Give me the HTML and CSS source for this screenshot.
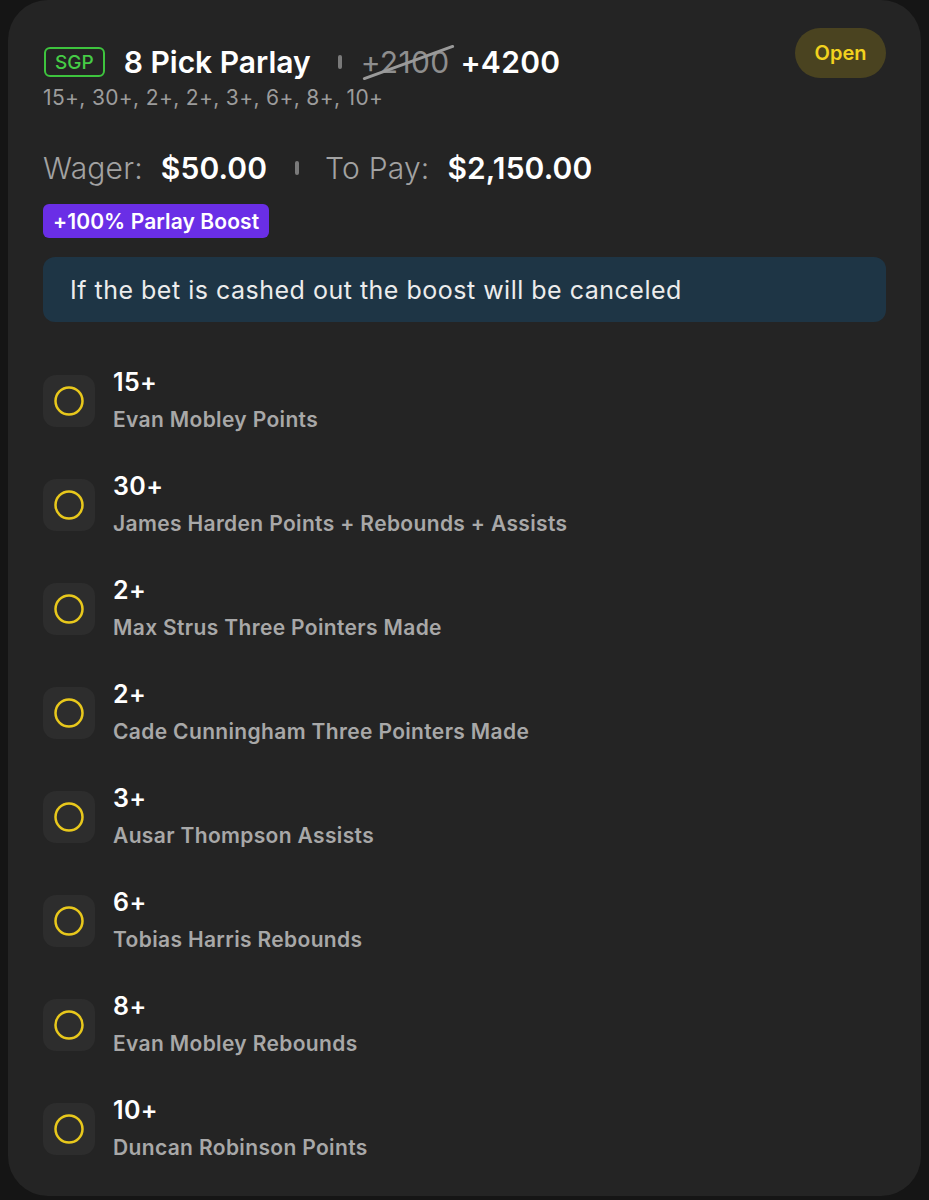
FILE: index.html
```html
<!DOCTYPE html>
<html lang="en">
<head>
<meta charset="utf-8">
<title>8 Pick Parlay</title>
<link rel="stylesheet" href="styles.css">
</head>
<body>
<div class="card">
  <div class="header">
    <div class="head-left">
      <div class="title-line">
        <span class="sgp">SGP</span>
        <span class="title">8 Pick Parlay</span>
        <span class="sep"></span>
        <span class="old-odds">+2100</span>
        <span class="new-odds">+4200</span>
      </div>
      <div class="legs-summary">15+, 30+, 2+, 2+, 3+, 6+, 8+, 10+</div>
    </div>
    <span class="status">Open</span>
  </div>

  <div class="amounts">
    <span class="label">Wager:</span>
    <span class="value">$50.00</span>
    <span class="sep big"></span>
    <span class="label">To Pay:</span>
    <span class="value">$2,150.00</span>
  </div>

  <div class="boost">+100% Parlay Boost</div>

  <div class="notice">If the bet is cashed out the boost will be canceled</div>

  <ul class="legs">
    <li class="leg"><span class="leg-icon"><svg width="52" height="52" viewBox="0 0 52 52"><circle cx="26" cy="26" r="13.5" fill="none" stroke="#e8c81c" stroke-width="2.5"/></svg></span><div class="leg-text"><div class="leg-line">15+</div><div class="leg-desc">Evan Mobley Points</div></div></li>
    <li class="leg"><span class="leg-icon"><svg width="52" height="52" viewBox="0 0 52 52"><circle cx="26" cy="26" r="13.5" fill="none" stroke="#e8c81c" stroke-width="2.5"/></svg></span><div class="leg-text"><div class="leg-line">30+</div><div class="leg-desc">James Harden Points + Rebounds + Assists</div></div></li>
    <li class="leg"><span class="leg-icon"><svg width="52" height="52" viewBox="0 0 52 52"><circle cx="26" cy="26" r="13.5" fill="none" stroke="#e8c81c" stroke-width="2.5"/></svg></span><div class="leg-text"><div class="leg-line">2+</div><div class="leg-desc">Max Strus Three Pointers Made</div></div></li>
    <li class="leg"><span class="leg-icon"><svg width="52" height="52" viewBox="0 0 52 52"><circle cx="26" cy="26" r="13.5" fill="none" stroke="#e8c81c" stroke-width="2.5"/></svg></span><div class="leg-text"><div class="leg-line">2+</div><div class="leg-desc">Cade Cunningham Three Pointers Made</div></div></li>
    <li class="leg"><span class="leg-icon"><svg width="52" height="52" viewBox="0 0 52 52"><circle cx="26" cy="26" r="13.5" fill="none" stroke="#e8c81c" stroke-width="2.5"/></svg></span><div class="leg-text"><div class="leg-line">3+</div><div class="leg-desc">Ausar Thompson Assists</div></div></li>
    <li class="leg"><span class="leg-icon"><svg width="52" height="52" viewBox="0 0 52 52"><circle cx="26" cy="26" r="13.5" fill="none" stroke="#e8c81c" stroke-width="2.5"/></svg></span><div class="leg-text"><div class="leg-line">6+</div><div class="leg-desc">Tobias Harris Rebounds</div></div></li>
    <li class="leg"><span class="leg-icon"><svg width="52" height="52" viewBox="0 0 52 52"><circle cx="26" cy="26" r="13.5" fill="none" stroke="#e8c81c" stroke-width="2.5"/></svg></span><div class="leg-text"><div class="leg-line">8+</div><div class="leg-desc">Evan Mobley Rebounds</div></div></li>
    <li class="leg"><span class="leg-icon"><svg width="52" height="52" viewBox="0 0 52 52"><circle cx="26" cy="26" r="13.5" fill="none" stroke="#e8c81c" stroke-width="2.5"/></svg></span><div class="leg-text"><div class="leg-line">10+</div><div class="leg-desc">Duncan Robinson Points</div></div></li>
  </ul>
</div>
</body>
</html>
```

FILE: styles.css
```css
* { box-sizing: border-box; }

html, body {
  margin: 0;
  padding: 0;
  background: #151515;
  font-family: Inter, "Noto Sans", "Liberation Sans", sans-serif;
  color: #ffffff;
}

.card {
  margin: 0 8px;
  height: 1196px;
  background: #242424;
  border-radius: 40px;
  padding: 28px 35px 0 35px;
}

.header {
  display: flex;
  justify-content: space-between;
  align-items: flex-start;
}

.head-left {
  padding-top: 16px;
}

.title-line {
  display: flex;
  align-items: center;
  height: 36px;
}

.sgp {
  display: inline-flex;
  align-items: center;
  justify-content: center;
  height: 30px;
  padding: 0 9px;
  border: 2px solid #3ec43e;
  border-radius: 6px;
  color: #46cc46;
  font-size: 19px;
  font-weight: 500;
  margin-left: 1px;
}

.title {
  margin-left: 19px;
  font-size: 30px;
  font-weight: 600;
}

.sep {
  display: inline-block;
  width: 4px;
  height: 14px;
  border-radius: 2px;
  background: #7a7a7a;
  margin: 0 19px 0 27px;
}

.old-odds {
  position: relative;
  font-size: 30px;
  font-weight: 400;
  color: #8e8e8e;
  letter-spacing: 0.3px;
}

.old-odds::after {
  content: "";
  position: absolute;
  left: -1px;
  top: 17px;
  width: 97px;
  height: 3px;
  border-radius: 2px;
  background: #9a9a9a;
  transform: rotate(-20deg);
}

.new-odds {
  margin-left: 11px;
  font-size: 30px;
  font-weight: 600;
  letter-spacing: 0.3px;
}

.legs-summary {
  margin-top: 6px;
  font-size: 21px;
  line-height: 24px;
  color: #9c9c9c;
  letter-spacing: 0.35px;
}

.status {
  display: inline-flex;
  align-items: center;
  justify-content: center;
  width: 91px;
  height: 50px;
  border-radius: 25px;
  background: #4a4320;
  color: #f2d21e;
  font-size: 20px;
  font-weight: 600;
}

.amounts {
  display: flex;
  align-items: center;
  margin-top: 38px;
  height: 40px;
  font-size: 30px;
}

.amounts .label {
  color: #a2a2a2;
  font-weight: 300;
  margin-right: 18px;
  letter-spacing: 0.2px;
}

.amounts .value {
  font-weight: 600;
  letter-spacing: 0.1px;
}

.sep.big {
  margin: 0 26px 0 28px;
}

.boost {
  display: inline-flex;
  align-items: center;
  margin-top: 16px;
  height: 34px;
  padding: 0 10px;
  border-radius: 6px;
  background: #6a2ee6;
  color: #ffffff;
  font-size: 21px;
  font-weight: 600;
  letter-spacing: 0.1px;
}

.notice {
  margin-top: 19px;
  height: 65px;
  display: flex;
  align-items: center;
  padding: 0 27px;
  border-radius: 12px;
  background: #1e3545;
  color: #ececec;
  font-size: 25px;
  font-weight: 400;
  letter-spacing: 0.5px;
}

.legs {
  list-style: none;
  margin: 46px 0 0 0;
  padding: 0;
  display: flex;
  flex-direction: column;
  gap: 38px;
}

.leg {
  display: flex;
  align-items: flex-start;
}

.leg-icon {
  display: block;
  width: 52px;
  height: 52px;
  margin-top: 7px;
  border-radius: 13px;
  background: #2d2d2d;
}

.leg-icon svg {
  display: block;
}

.leg-text {
  margin-left: 18px;
}

.leg-line {
  font-size: 25px;
  line-height: 28px;
  font-weight: 600;
  color: #ffffff;
  letter-spacing: 0.4px;
}

.leg-desc {
  margin-top: 10px;
  font-size: 21px;
  line-height: 28px;
  font-weight: 600;
  color: #a8a8a8;
  letter-spacing: 0.35px;
}
```
